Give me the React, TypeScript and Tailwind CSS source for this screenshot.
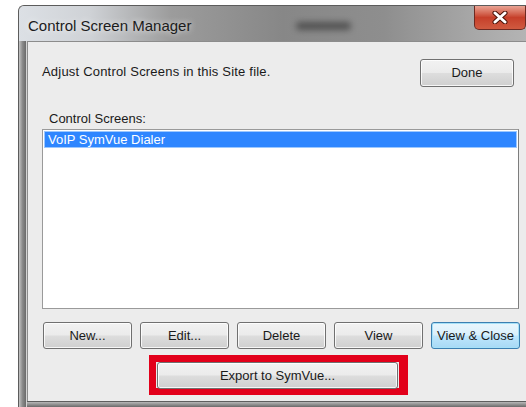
import React from "react"

const btn =
  "flex items-center justify-center rounded-[3px] border border-[#707070] text-[13px] text-[#1a1a1a] shadow-[inset_0_0_0_1px_rgba(255,255,255,0.8)] bg-[linear-gradient(to_bottom,#f2f2f2_0%,#ebebeb_48%,#dddddd_52%,#cfcfcf_100%)]"

const rowButtons = ["New...", "Edit...", "Delete", "View"]

export default function App() {
  return (
    <div className="w-[526px] h-[407px] overflow-hidden bg-white pt-[5px] pl-[18px] font-['Liberation_Sans',Arial,sans-serif]">
      <div className="flex h-[402px] flex-col rounded-tl-[6px] border-l border-t border-[#5c5c5c] bg-[#a0a0a0]">
        {/* title bar */}
        <div className="flex h-[35px] shrink-0 items-start rounded-tl-[5px] bg-[linear-gradient(to_right,#dce0e5_0%,#cfd2d6_14%,#9c9c9c_30%,#878787_52%,#8e8e8e_72%,#a8a8a8_90%,#b4b4b4_100%)]">
          <span className="mt-[11px] ml-[9px] text-[15px] leading-[18px] text-[#1c1c1c] [text-shadow:0_0_6px_rgba(255,255,255,0.9)]">
            Control Screen Manager
          </span>
          <div className="mt-[16px] ml-[105px] h-[8px] w-[55px] rounded-full bg-[#3a3a3a] opacity-70 blur-[3px]" />
          <div className="ml-auto flex h-[24px] w-[52px] items-center justify-center rounded-b-[5px] border border-t-0 border-[#6e2a22] bg-linear-to-b from-[#e9a394] via-[#c63f2a] to-[#d05a40]">
            <svg width="16" height="13" viewBox="0 0 16 13">
              <path d="M3 2 L13 11 M13 2 L3 11" stroke="#4a1208" strokeWidth="5" strokeLinecap="round" />
              <path d="M3 2 L13 11 M13 2 L3 11" stroke="#ffffff" strokeWidth="3" strokeLinecap="round" />
            </svg>
          </div>
        </div>

        <div className="flex min-h-0 flex-1">
          {/* left frame edge */}
          <div className="w-[8px] shrink-0 border-r border-[#d4d4d4] bg-linear-to-r from-[#c4c4c4] via-[#8a8a8a] to-[#6a6a6a]" />

          <div className="flex min-w-0 flex-1 flex-col">
            {/* client area */}
            <div className="flex flex-1 flex-col border-l border-t border-[#8c8c8c] bg-[#ececec] pt-[17px] pl-[14px] pr-[6px]">
              <div className="flex h-[28px] items-start justify-between">
                <span className="mt-[5px] text-[13px] leading-[16px] tracking-[0.2px] text-[#1a1a1a]">
                  Adjust Control Screens in this Site file.
                </span>
                <button className={`${btn} h-[28px] w-[94px] mr-[6px]`}>Done</button>
              </div>

              <span className="mt-[24px] pl-[7px] text-[13px] leading-[16px] text-[#1a1a1a]">
                Control Screens:
              </span>

              <div className="mt-[2px] mr-[1px] h-[180px] border border-[#9a9a9a] border-r-[#7d7d7d] bg-white p-[1px]">
                <div className="flex h-[17px] items-center border border-[#9cc8ff] bg-[#2e86ff] pl-[3px] text-[13px] text-white">
                  VoIP SymVue Dialer
                </div>
              </div>

              <div className="mt-[13px] ml-[1px] flex gap-[8px]">
                {rowButtons.map(label => (
                  <button key={label} className={`${btn} h-[27px] w-[89px]`}>
                    {label}
                  </button>
                ))}
                <button className="flex h-[27px] w-[89px] items-center justify-center rounded-[3px] border border-[#3c7fb1] text-[13px] text-[#1a1a1a] shadow-[inset_0_0_0_1px_#a6e1f8] bg-[linear-gradient(to_bottom,#eaf6fd_0%,#d9f0fc_48%,#bee6fd_52%,#a7d9f5_100%)]">
                  View &amp; Close
                </button>
              </div>

              <div className="mt-[6px] ml-[107px] flex h-[40px] w-[259px] border-[7px] border-r-[9px] border-[#e2001a] bg-[#ececec]">
                <button className={`${btn} ml-[1px] h-[27px] w-[241px]`}>Export to SymVue...</button>
              </div>
            </div>

            {/* bottom frame edge */}
            <div className="h-[6px] shrink-0 border-t border-[#5e5e5e] bg-linear-to-b from-[#b8b8b8] to-[#6a6a6a]" />
          </div>
        </div>
      </div>
    </div>
  )
}
